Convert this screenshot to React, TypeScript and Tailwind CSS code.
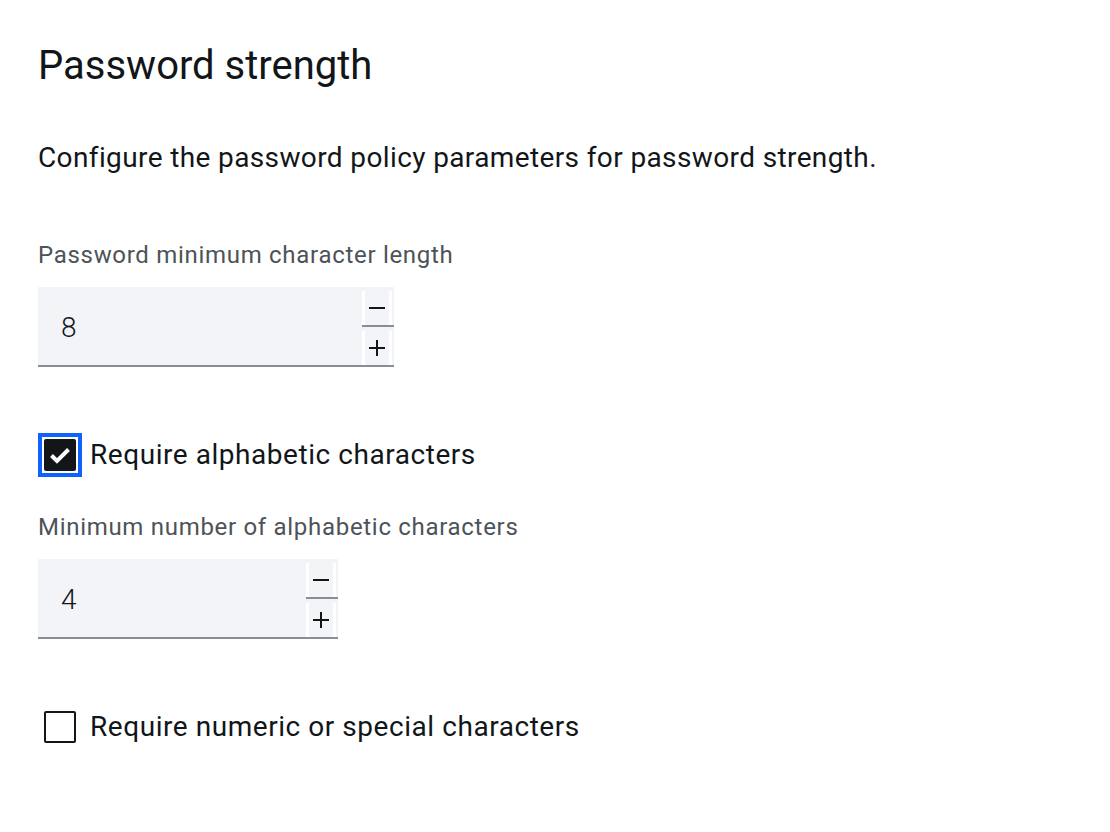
import React from "react";

function Minus() {
  return (
    <svg width="16" height="16" viewBox="0 0 16 16" aria-hidden="true">
      <rect x="0" y="7" width="16" height="2" fill="#121619" />
    </svg>
  );
}

function Plus() {
  return (
    <svg width="16" height="16" viewBox="0 0 16 16" aria-hidden="true">
      <rect x="0" y="7" width="16" height="2" fill="#121619" />
      <rect x="7" y="0" width="2" height="16" fill="#121619" />
    </svg>
  );
}

function NumberField({
  label,
  value,
  widthClass,
  className,
}: {
  label: string;
  value: string;
  widthClass: string;
  className: string;
}) {
  return (
    <div className={className}>
      <div className="text-[24px] leading-[32px] tracking-[0.7px] text-[#4d5358]">{label}</div>
      <div className={`mt-[16px] flex h-[80px] border-b-2 border-[#878d96] bg-[#f2f4f8] ${widthClass}`}>
        <div className="flex flex-1 items-center pl-[23px] pt-[3px] text-[28px] font-light leading-[36px] text-[#121619]">{value}</div>
        <div className="flex w-[32px] flex-col pt-[4px]">
          <div className="mr-[2px] flex h-[34px] items-center justify-center border-l-[3px] border-r-[3px] border-white">
            <Minus />
          </div>
          <div className="h-[2px] w-full bg-[#878d96]" />
          <div className="mr-[2px] mt-[4px] flex h-[34px] items-center justify-center border-l-[3px] border-r-[3px] border-white">
            <Plus />
          </div>
        </div>
      </div>
    </div>
  );
}

function CheckboxRow({
  label,
  checked,
  focused,
  className,
}: {
  label: string;
  checked: boolean;
  focused: boolean;
  className: string;
}) {
  return (
    <div className={`flex h-[44px] items-center ${className}`}>
      <div
        className={
          focused
            ? "flex h-[44px] w-[44px] items-center justify-center border-4 border-[#0f62fe]"
            : "flex h-[44px] w-[44px] items-center justify-center border-4 border-transparent"
        }
      >
        {checked ? (
          <div className="flex h-[32px] w-[32px] items-center justify-center rounded-[2px] bg-[#121619]">
            <svg width="32" height="32" viewBox="0 0 32 32" aria-hidden="true">
              <path d="M7.5 16.5 L13 22 L24.5 10.5" fill="none" stroke="#ffffff" strokeWidth="4" strokeLinejoin="miter" />
            </svg>
          </div>
        ) : (
          <div className="h-[32px] w-[32px] rounded-[2px] border-2 border-[#121619] bg-white" />
        )}
      </div>
      <span className="ml-[8px] text-[28px] leading-[40px] tracking-[0.55px] text-[#121619]">{label}</span>
    </div>
  );
}

export default function App() {
  return (
    <div className="min-h-screen w-full bg-white font-[family-name:Roboto,sans-serif] text-[#121619]">
      <div className="pl-[38px] pt-[38px]">
        <h1 className="text-[40px] font-normal leading-[56px]">Password strength</h1>
        <p className="mt-[44px] text-[28px] leading-[40px] tracking-[0.38px]">
          Configure the password policy parameters for password strength.
        </p>
        <NumberField
          className="mt-[61px]"
          label="Password minimum character length"
          value="8"
          widthClass="w-[356px]"
        />
        <CheckboxRow className="mt-[66px]" label="Require alphabetic characters" checked focused />
        <NumberField
          className="mt-[34px]"
          label="Minimum number of alphabetic characters"
          value="4"
          widthClass="w-[300px]"
        />
        <CheckboxRow
          className="mt-[66px]"
          label="Require numeric or special characters"
          checked={false}
          focused={false}
        />
      </div>
    </div>
  );
}
